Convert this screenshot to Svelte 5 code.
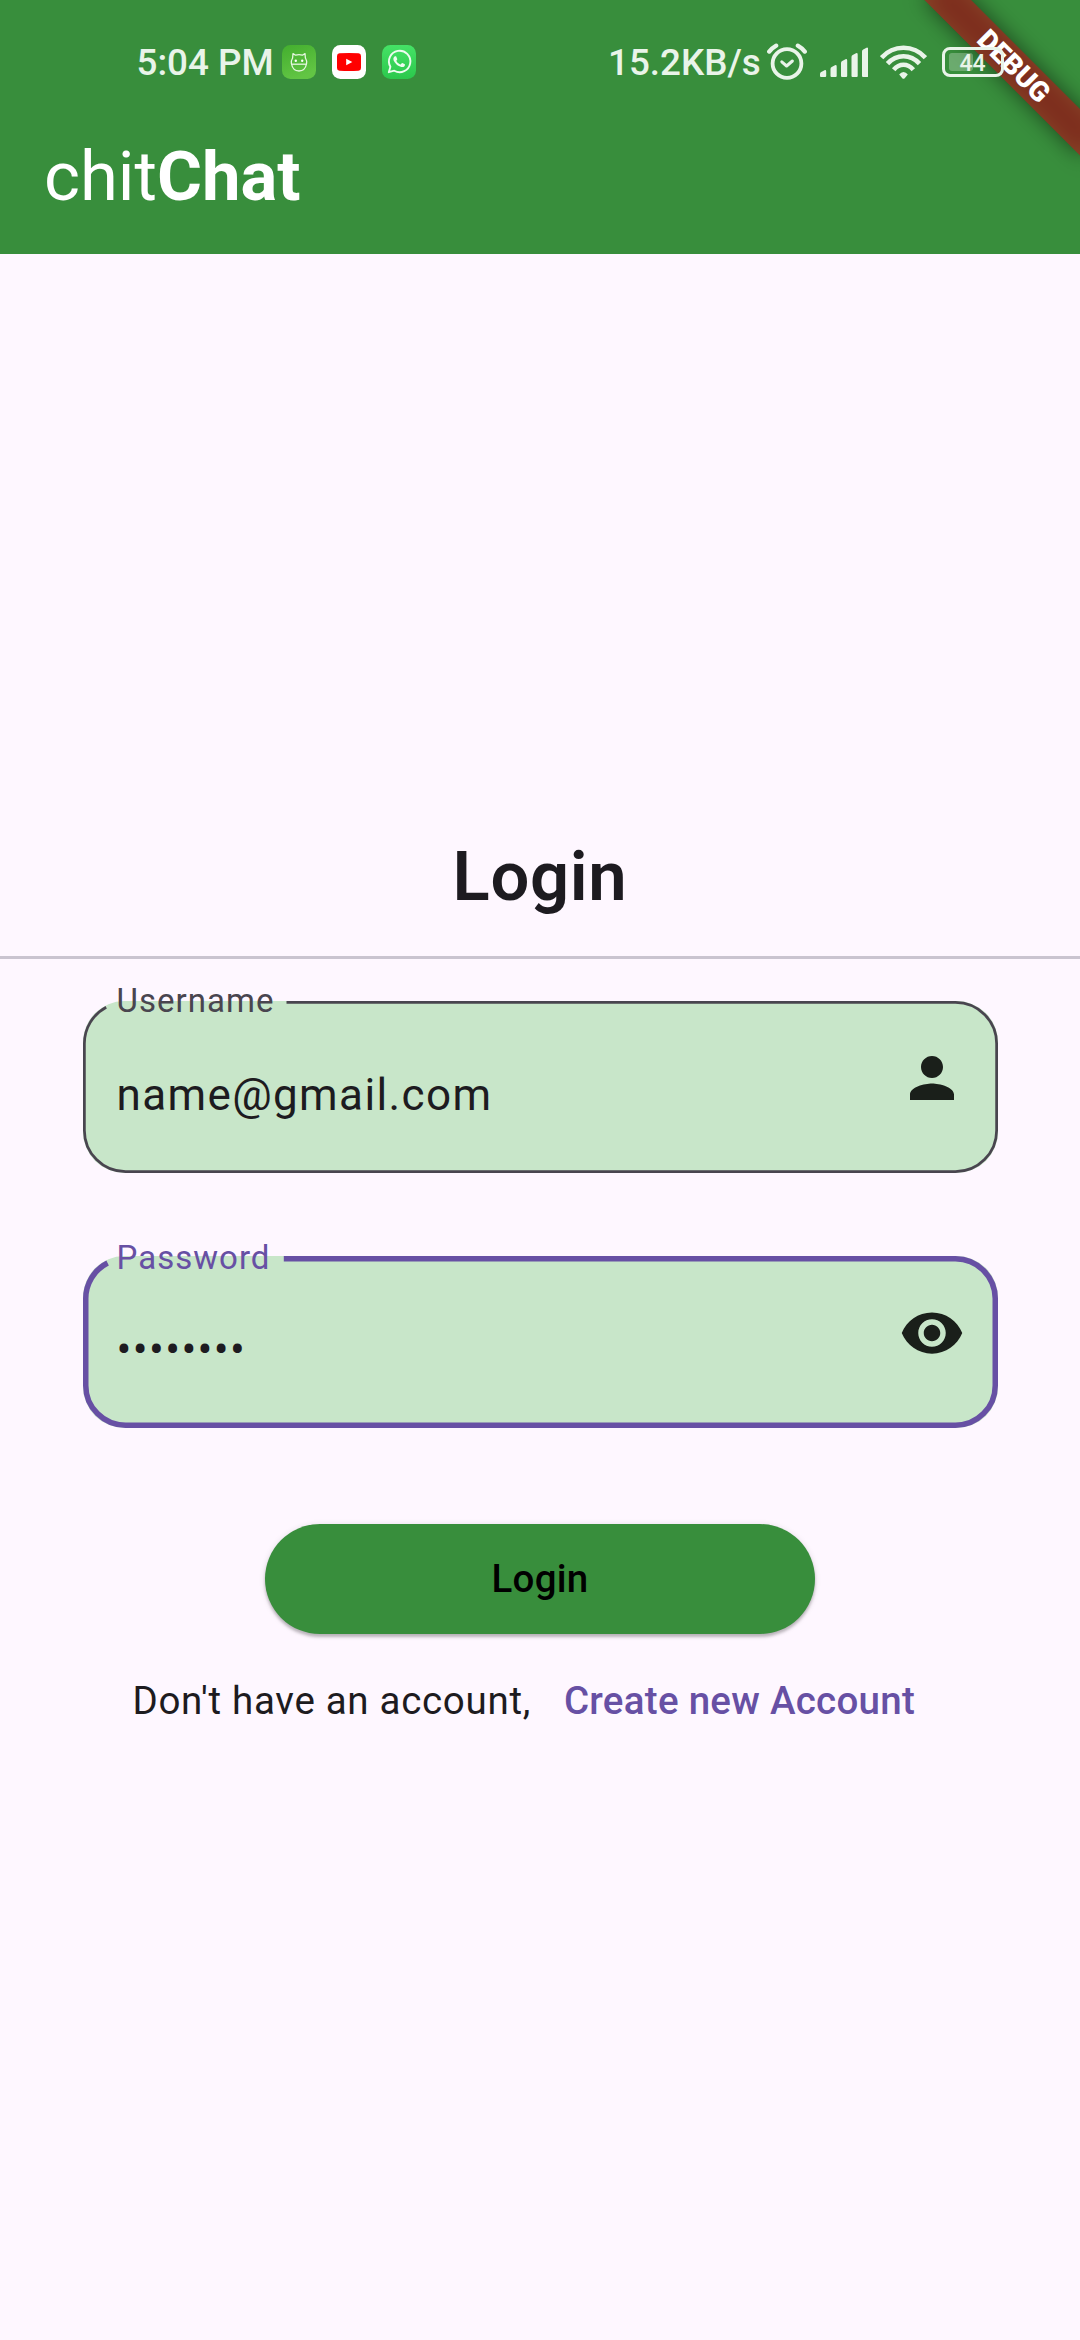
<script>
  const bars = [
    { x: 0, y: 23, h: 7 },
    { x: 10.5, y: 18, h: 12 },
    { x: 21, y: 12, h: 18 },
    { x: 31.5, y: 6, h: 24 },
    { x: 42, y: 0.5, h: 29.5 }
  ];
</script>

<div class="screen">
  <header>
    <div class="status">
      <span class="time">5:04 PM</span>
      <svg class="app" viewBox="0 0 34 34">
        <defs>
          <linearGradient id="pet" x1="0" y1="0" x2="0.4" y2="1"><stop offset="0" stop-color="#43ae2e" /><stop offset="1" stop-color="#62c544" /></linearGradient>
        </defs>
        <rect width="34" height="34" rx="8.5" fill="url(#pet)" />
        <g fill="none" stroke="#e6f7e0" stroke-width="1.3" stroke-linejoin="round">
          <path d="M10.600 13 11 8.600 13.600 10.200Q17 9.200 20.400 10.200L23 8.600 23.400 13Q25 15.500 24.600 18.500Q23.200 26 17 26Q10.800 26 9.400 18.500Q9 15.500 10.600 13Z" />
          <path d="M9.200 19.200H24.800" />
        </g>
        <circle cx="13.800" cy="15.700" r="1.200" fill="#fff" /><circle cx="20.200" cy="15.700" r="1.200" fill="#fff" />
      </svg>
      <svg class="app" viewBox="0 0 34 34">
        <rect width="34" height="34" rx="8.500" fill="#fff" />
        <path d="M7.500 8.300Q17 7.500 26.500 8.300Q29 8.500 29 11V23Q29 25.500 26.500 25.700Q17 26.500 7.500 25.700Q5 25.500 5 23V11Q5 8.500 7.500 8.300Z" fill="#f00" />
        <path d="M14.200 13.700V20.300L20.300 17Z" fill="#fff" />
      </svg>
      <svg class="app" viewBox="0 0 34 34">
        <defs>
          <linearGradient id="wa" x1="0" y1="0" x2="0" y2="1"><stop offset="0" stop-color="#45e266" /><stop offset="1" stop-color="#2bc84c" /></linearGradient>
        </defs>
        <rect width="34" height="34" rx="8.500" fill="url(#wa)" />
        <path d="M6.800 27.200 8.400 21.800A10.700 10.700 0 1 1 12.300 25.700Z" fill="none" stroke="#eefcf0" stroke-width="1.900" stroke-linejoin="round" />
        <path transform="translate(5.600 5.200) scale(.96)" d="M17.470 14.380c-.3-.15-1.760-.87-2.030-.97-.27-.1-.47-.15-.67.150-.2.300-.77.970-.94 1.160-.17.200-.35.220-.64.080-.3-.15-1.260-.46-2.390-1.480-.88-.79-1.480-1.760-1.650-2.060-.17-.3-.02-.46.130-.6.130-.13.300-.35.450-.52.150-.17.200-.3.300-.5.100-.2.050-.37-.03-.52-.07-.15-.67-1.610-.92-2.210-.24-.58-.49-.5-.67-.51h-.57c-.2 0-.52.070-.79.370-.27.300-1.040 1.020-1.040 2.480s1.070 2.880 1.210 3.070c.150.200 2.100 3.200 5.080 4.490.71.300 1.260.49 1.690.62.710.230 1.360.2 1.870.120.570-.08 1.760-.72 2-1.410.250-.69.250-1.290.180-1.410-.07-.12-.27-.2-.57-.35z" fill="#eefcf0" />
      </svg>
      <span class="speed">15.2KB/s</span>
      <svg class="alarm" viewBox="0 0 40 38" fill="none" stroke="#e9f4e9" stroke-linecap="round">
        <circle cx="20" cy="20.500" r="14.400" stroke-width="3.800" />
        <path d="M14.800 18.800 19.600 23 25.400 18" stroke-width="3" stroke-linejoin="round" />
        <path d="M2.200 8.600Q5 5 9.200 2.600M30.800 2.600Q35 5 37.800 8.600" stroke-width="4.200" />
      </svg>
      <svg class="signal" viewBox="0 0 48.500 31" fill="#e9f4e9">
        {#each bars as b}
          <path d="M{b.x} {b.y + b.h - 1}V{b.y + 4}Q{b.x} {b.y + 2.600} {b.x + 1.200} {b.y + 2}L{b.x + 4.500} {b.y + .2}Q{b.x + 6.200} {b.y - .3} {b.x + 6.200} {b.y + 1.500}V{b.y + b.h - 1}Q{b.x + 6.200} {b.y + b.h} {b.x + 5.200} {b.y + b.h}H{b.x + 1}Q{b.x} {b.y + b.h} {b.x} {b.y + b.h - 1}Z" />
        {/each}
      </svg>
      <svg class="wifi" viewBox="0 0 47 34" fill="none" stroke="#e9f4e9" stroke-width="4.600">
        <path d="M1.600 12.600Q10.500 2.700 23.500 2.700T45.400 12.600" />
        <path d="M7.500 18.600Q14.300 11.200 23.500 11.200T39.500 18.600" />
        <path d="M13.700 24.800Q18 19.800 23.500 19.800T33.300 24.800" />
        <path d="M19.200 29.600Q21 27 23.500 27T27.800 29.600L24.700 33.200Q23.500 34.200 22.300 33.200Z" fill="#e9f4e9" stroke="none" />
      </svg>
      <div class="battery"><i></i><span>44</span></div>
    </div>
    <h1>chit<b>Chat</b></h1>
    <div class="corner"><div class="ribbon"><span>DEBUG</span></div></div>
  </header>

  <main>
    <h2>Login</h2>
    <hr />
    <form onsubmit={(e) => e.preventDefault()}>
      <div class="field">
        <svg class="outline" viewBox="0 0 915 172" fill="none" stroke="#49454f" stroke-width="2.750">
          <path d="M203.500 1.375H872.400A41.250 41.250 0 0 1 913.625 42.600V129.400A41.250 41.250 0 0 1 872.400 170.600H42.600A41.250 41.250 0 0 1 1.375 129.400V42.600A41.250 41.250 0 0 1 23.200 6.200" />
        </svg>
        <div class="copy"><span class="label">Username</span><span class="value">name@gmail.com</span></div>
        <svg class="icon" viewBox="0 0 24 24"><path d="M12 12c2.210 0 4-1.790 4-4s-1.790-4-4-4-4 1.790-4 4 1.790 4 4 4zm0 2c-2.670 0-8 1.340-8 4v2h16v-2c0-2.660-5.330-4-8-4z" /></svg>
      </div>
      <div class="field focused">
        <svg class="outline" viewBox="0 0 915 172" fill="none" stroke="#6750a4" stroke-width="5.500">
          <path d="M200.800 2.750H872.400A39.900 39.900 0 0 1 912.250 42.600V129.400A39.900 39.900 0 0 1 872.400 169.250H42.600A39.900 39.900 0 0 1 2.750 129.400V42.600A39.900 39.900 0 0 1 24.600 7" />
        </svg>
        <div class="copy"><span class="label">Password</span><span class="value">••••••••</span></div>
        <svg class="icon" viewBox="0 0 24 24"><path d="M12 4.500C7 4.500 2.730 7.610 1 12c1.730 4.390 6 7.500 11 7.500s9.270-3.110 11-7.500c-1.730-4.390-6-7.500-11-7.500zM12 17c-2.760 0-5-2.240-5-5s2.240-5 5-5 5 2.240 5 5-2.240 5-5 5zm0-8c-1.660 0-3 1.340-3 3s1.340 3 3 3 3-1.340 3-3-1.340-3-3-3z" /></svg>
      </div>
      <button class="submit">Login</button>
      <div class="signup"><span>Don't have an account,</span><button type="button">Create new Account</button></div>
    </form>
  </main>
</div>

<style>
  :global(body) { background: #fef7ff; }
  .screen {
    width: 1080px;
    height: 2340px;
    display: flex;
    flex-direction: column;
    background: #fef7ff;
    color: #1d1b20;
    font-family: Roboto, sans-serif;
    overflow: hidden;
  }
  svg { display: block; flex: none; }
  header { position: relative; height: 254px; flex: none; background: #388e3c; }
  .status {
    height: 124px;
    box-sizing: border-box;
    padding-left: 136.500px;
    display: flex;
    align-items: center;
    font-weight: 500;
    font-size: 36.800px;
    line-height: 44px;
    color: #e9f4e9;
    white-space: nowrap;
  }
  .time { width: 145.500px; padding-top: 2px; }
  .speed { width: 159px; padding-top: 2px; margin-left: 176px; }
  .app { width: 34px; height: 34px; margin-right: 16px; }
  .alarm { width: 40px; height: 38px; }
  .signal { width: 48.500px; height: 31px; margin-left: 12.500px; margin-top: 1px; }
  .wifi { width: 47px; height: 34px; margin-left: 11.500px; }
  .battery {
    position: relative;
    z-index: 2;
    width: 62px;
    height: 30px;
    box-sizing: border-box;
    margin-left: 15px;
    border: 3px solid #e9f4e9;
    border-radius: 8px;
    display: flex;
    align-items: center;
    justify-content: center;
    font-size: 23px;
    line-height: 24px;
  }
  .battery i { position: absolute; left: 4px; top: 3px; width: 24px; height: 18px; border-radius: 3px; background: rgba(255, 255, 255, .26); }
  .battery span { position: relative; padding-top: 3px; }
  h1 { margin: 0; padding: 7px 0 0 44px; font-weight: 400; font-size: 68.750px; line-height: 92px; color: #fff; }
  h1 b { font-weight: 700; }
  .corner { position: absolute; z-index: 1; top: 0; right: 0; width: 260px; height: 254px; overflow: hidden; }
  .ribbon {
    position: absolute;
    top: 77px;
    left: 150px;
    width: 220px;
    height: 33px;
    transform: rotate(45deg);
    transform-origin: 110px -77px;
    text-align: center;
    color: #fff;
    font-size: 28px;
    line-height: 33px;
    font-weight: 900;
  }
  .ribbon::before, .ribbon::after { content: ''; position: absolute; inset: 0; background: rgba(0, 0, 0, .5); filter: blur(10.900px); }
  .ribbon::after { background: rgba(183, 28, 28, .627); filter: none; }
  .ribbon span { position: relative; z-index: 1; }
  main { display: flex; flex-direction: column; }
  h2 { margin: 582.500px 0 0; text-align: center; font-size: 68.750px; line-height: 80px; font-weight: 600; letter-spacing: .7px; }
  hr { width: 100%; height: 2.750px; margin: 39.500px 0 0; border: 0; background: #cac4d0; }
  form { display: flex; flex-direction: column; padding: 42.500px 82.500px 0; }
  .field {
    position: relative;
    height: 172px;
    box-sizing: border-box;
    display: flex;
    justify-content: space-between;
    border-radius: 41.250px;
    background: #c8e6c9;
    padding: 0 32.500px 0 34px;
  }
  .field + .field { margin-top: 82.500px; }
  .outline { position: absolute; inset: 0; width: 915px; height: 172px; }
  .copy { display: flex; flex-direction: column; }
  .label { margin-top: -20px; font-size: 33px; line-height: 40px; letter-spacing: 1.030px; color: #49454f; }
  .value { margin-top: 47px; font-size: 44px; line-height: 54px; letter-spacing: 1.375px; }
  .focused .label { margin-top: -18px; color: #6750a4; }
  .focused .value { margin-top: 45px; }
  .icon { width: 66px; height: 66px; margin-top: 44px; fill: #1a1f1a; }
  button { border: 0; padding: 0; font-family: inherit; font-size: 38.500px; font-weight: 500; letter-spacing: .275px; background: none; }
  .submit {
    align-self: center;
    width: 550px;
    height: 110px;
    margin-top: 96px;
    border-radius: 55px;
    background: #388e3c;
    color: #000;
    box-shadow: 0 3px 3px rgba(0, 0, 0, .22), 0 1px 6px rgba(0, 0, 0, .12);
  }
  .signup { display: flex; align-items: center; height: 133px; padding-left: 50px; font-size: 38.500px; letter-spacing: .690px; white-space: nowrap; }
  .signup button { margin-left: 33px; color: #6750a4; }
</style>
